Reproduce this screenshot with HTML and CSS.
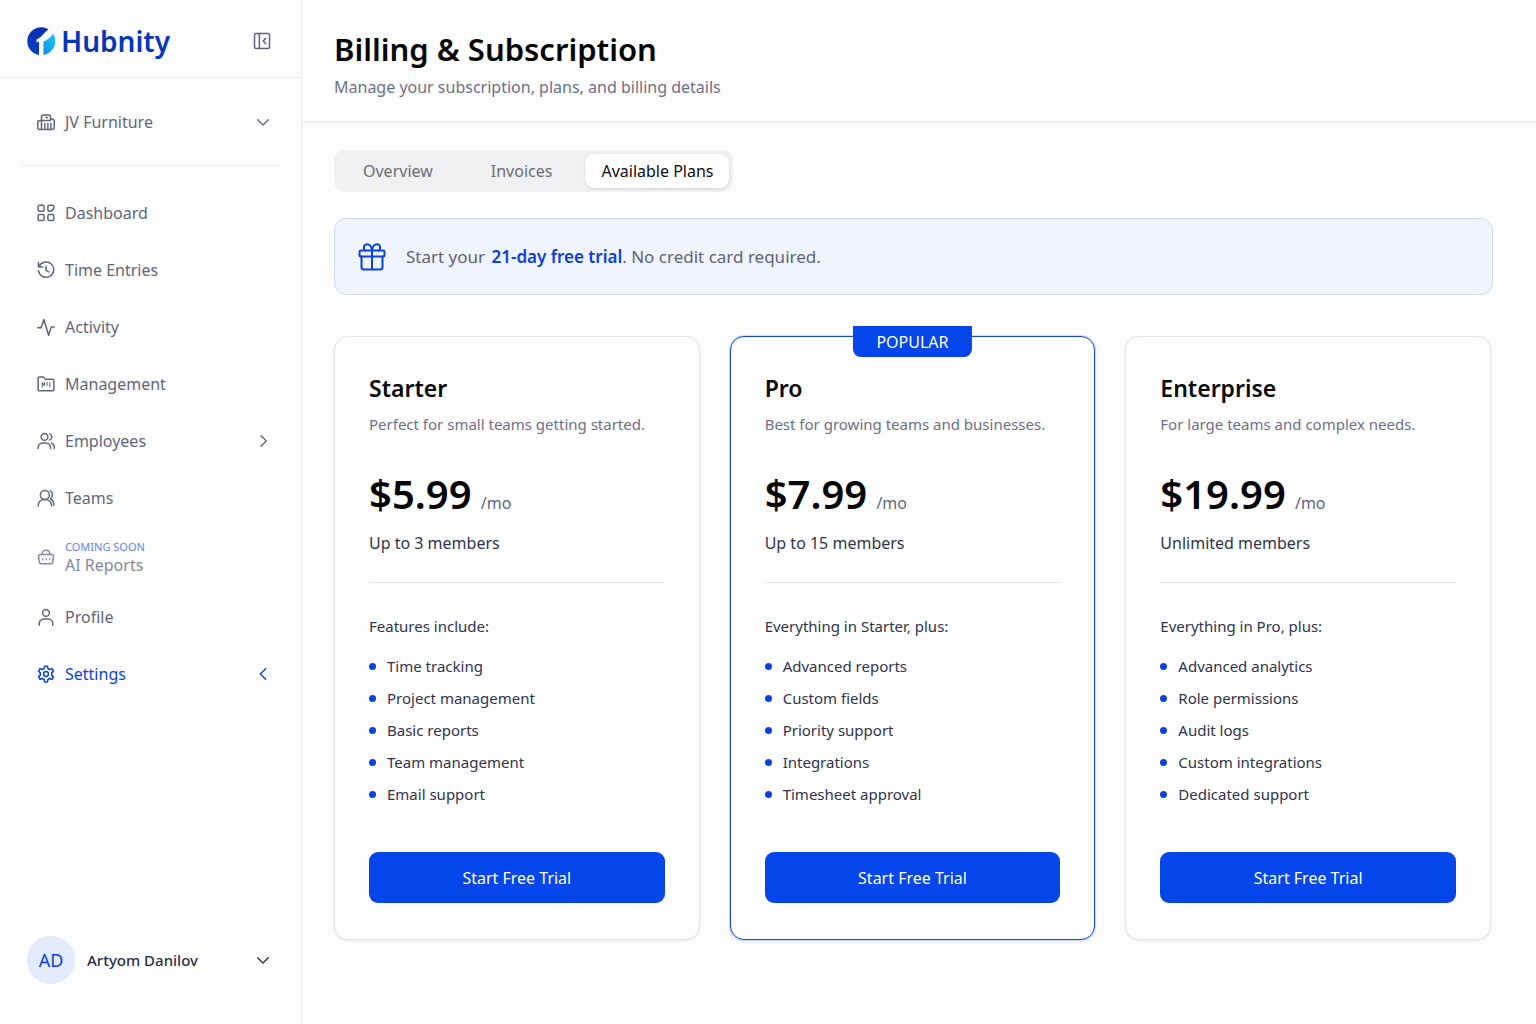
FILE: index.html
```html
<!DOCTYPE html>
<html lang="en">
<head>
  <meta charset="UTF-8" />
  <meta name="viewport" content="width=device-width, initial-scale=1.0"/>
  <title>Hubnity - Billing &amp; Subscription</title>
  <link rel="stylesheet" href="styles.css">
</head>
<body>
  <div class="layout">
    <!-- SIDEBAR -->
    <aside class="sidebar">
      <div class="sidebar-header">
        <a href="#" class="logo">
          <svg class="logo-mark" viewBox="0 0 28 28" aria-hidden="true">
            <defs>
              <linearGradient id="logoDark" x1="0" y1="0" x2="0" y2="1">
                <stop offset="0" stop-color="#0a2fb0"/>
                <stop offset="1" stop-color="#0540c4"/>
              </linearGradient>
              <linearGradient id="logoLight" x1="1" y1="0" x2="0" y2="1">
                <stop offset="0" stop-color="#1fd0f5"/>
                <stop offset="1" stop-color="#0a8df0"/>
              </linearGradient>
            </defs>
            <path fill="url(#logoDark)" d="M21.5 2.2A14 14 0 1 0 12 28V14.500L9.500 15.500V12.500C14 11 16.500 6 21.500 2.200Z"/>
            <path fill="url(#logoLight)" d="M26 6.500A14 14 0 0 1 16.500 28V14.500C19 13.500 23.500 11 26 6.500Z"/>
          </svg>
          <span>Hubnity</span>
        </a>
        <button type="button" class="icon-btn" aria-label="Collapse sidebar">
          <svg class="icon" viewBox="0 0 24 24"><rect x="2" y="2" width="20" height="20" rx="2"/><path d="M8.500 2v20M17 8.500L13.500 12l3.500 3.500"/></svg>
        </button>
      </div>

      <div class="company">
        <button type="button" class="nav-item">
          <svg class="icon" viewBox="0 0 24 24"><path d="M7 22H4a3 3 0 0 1-3-3v-6a3 3 0 0 1 3-3h2M18 8h2a3 3 0 0 1 3 3v8a3 3 0 0 1-3 3H7M6 22V5a2.500 2.500 0 0 1 2.500-2.500h7A2.500 2.500 0 0 1 18 5v5M6 10h12M10.500 22v-8M14.500 22v-8M18.500 22v-8M12 6h2"/></svg>
          <span>JV Furniture</span>
          <svg class="icon arrow" viewBox="0 0 24 24"><path d="M4 8.500l8 8 8-8"/></svg>
        </button>
      </div>

      <nav class="nav">
        <a href="#" class="nav-item">
          <svg class="icon" viewBox="0 0 24 24"><rect x="1.500" y="1.500" width="8" height="8" rx="2"/><path d="M16.500 1.500h4a2 2 0 0 1 2 2v2.500L19 9.500h-2.500a2 2 0 0 1-2-2v-4a2 2 0 0 1 2-2z"/><rect x="1.500" y="14" width="8" height="8" rx="2"/><rect x="14.500" y="14" width="8" height="8" rx="2"/></svg>
          <span>Dashboard</span>
        </a>
        <a href="#" class="nav-item">
          <svg class="icon" viewBox="0 0 24 24"><path d="M2 2v6h5.500M2.500 8A10.200 10.200 0 1 1 2 13M12 7v5.500l3.500 2"/></svg>
          <span>Time Entries</span>
        </a>
        <a href="#" class="nav-item">
          <svg class="icon" viewBox="0 0 24 24"><path d="M1 13h4.500L9 2l6.500 21 3.500-11h4"/></svg>
          <span>Activity</span>
        </a>
        <a href="#" class="nav-item">
          <svg class="icon" viewBox="0 0 24 24"><path d="M1.500 4A1.500 1.500 0 0 1 3 2.500h5.500l2.500 3h10A1.500 1.500 0 0 1 22.500 7v12.500A1.500 1.500 0 0 1 21 21H3a1.500 1.500 0 0 1-1.500-1.500z"/><path stroke-width="1.500" d="M7 16v-5.500l3 3.500v-4M13.500 10v3.500M17 10v5.500"/></svg>
          <span>Management</span>
        </a>
        <a href="#" class="nav-item">
          <svg class="icon" viewBox="0 0 24 24"><circle cx="10" cy="6.500" r="4.500"/><path d="M1.500 22v-1.500a6 6 0 0 1 6-6h4.500a6 6 0 0 1 6 6V22M17 2.500a4.200 4.200 0 0 1 0 8M19 14.500a6 6 0 0 1 4 5.500v2"/></svg>
          <span>Employees</span>
          <svg class="icon arrow" viewBox="0 0 24 24"><path d="M9 4l8 8-8 8"/></svg>
        </a>
        <a href="#" class="nav-item">
          <svg class="icon" viewBox="0 0 24 24"><circle cx="10.500" cy="8" r="6"/><path d="M1.500 22.500c0-5 3.500-8.500 9-8.500s9 3.500 9 8.500M17.500 2.500c4 1.500 4 8 .5 10.500 3 1.500 4.500 5 4.500 8.500"/></svg>
          <span>Teams</span>
        </a>
        <a href="#" class="nav-item soon">
          <svg class="icon" viewBox="0 0 24 24"><path d="M4.500 8.500h15a2.500 2.500 0 0 1 2.500 2.500l-1 7.500a3 3 0 0 1-3 2.500H6a3 3 0 0 1-3-2.500L2 11a2.500 2.500 0 0 1 2.500-2.500zM6.500 8.500C7 5 9 3 12 3s5 2 5.500 5.500M7.500 14.500v1.500M12.500 14.500v1M17 14.500v.5"/></svg>
          <span><small>COMING SOON</small>AI Reports</span>
        </a>
        <a href="#" class="nav-item">
          <svg class="icon" viewBox="0 0 24 24"><circle cx="12" cy="6.500" r="4.500"/><path d="M3 23v-2.500a6 6 0 0 1 6-6h6a6 6 0 0 1 6 6V23"/></svg>
          <span>Profile</span>
        </a>
        <a href="#" class="nav-item active">
          <svg class="icon" viewBox="0 0 24 24"><path d="M10.200 1.500h3.600l.8 3.200 2.300 1.300 3.100-1 1.900 3.200-2.300 2.300v3l2.300 2.300-1.900 3.200-3.100-1-2.300 1.300-.8 3.200h-3.600l-.8-3.200L7.100 18 4 19l-1.900-3.200 2.300-2.300v-3L2.100 8.200 4 5l3.100 1 2.300-1.300z"/><circle cx="12" cy="12" r="3.200"/></svg>
          <span>Settings</span>
          <svg class="icon arrow" viewBox="0 0 24 24"><path d="M16 4l-8 8 8 8"/></svg>
        </a>
      </nav>

      <button type="button" class="user">
        <span class="avatar">AD</span>
        <span>Artyom Danilov</span>
        <svg class="icon arrow" viewBox="0 0 24 24"><path d="M4 8.500l8 8 8-8"/></svg>
      </button>
    </aside>

    <!-- CONTENT -->
    <main class="main">
      <header class="page-header">
        <h1>Billing &amp; Subscription</h1>
        <p>Manage your subscription, plans, and billing details</p>
      </header>

      <div class="content">
        <div class="tabs" role="tablist">
          <button type="button" class="tab" role="tab">Overview</button>
          <button type="button" class="tab" role="tab">Invoices</button>
          <button type="button" class="tab active" role="tab" aria-selected="true">Available Plans</button>
        </div>

        <div class="banner">
          <svg class="icon gift" viewBox="0 0 28 28"><rect x="1.500" y="7.500" width="25" height="6" rx="1.500"/><path d="M3.500 13.500V24A2.500 2.500 0 0 0 6 26.500h16a2.500 2.500 0 0 0 2.500-2.500V13.500M14 7.500v19M14 7.500C13.500 4 12 1.200 9 1.200S5 5 7 7.500M14 7.500C14.500 4 16 1.200 19 1.200S23 5 21 7.500"/></svg>
          <p>Start your <strong>21-day free trial</strong>. No credit card required.</p>
        </div>

        <div class="plans">
          <section class="plan">
            <h2>Starter</h2>
            <p class="desc">Perfect for small teams getting started.</p>
            <p class="price"><strong>$5.99</strong> /mo</p>
            <p class="members">Up to 3 members</p>
            <h3>Features include:</h3>
            <ul>
              <li>Time tracking</li>
              <li>Project management</li>
              <li>Basic reports</li>
              <li>Team management</li>
              <li>Email support</li>
            </ul>
            <button type="button" class="btn">Start Free Trial</button>
          </section>

          <section class="plan popular">
            <span class="badge">POPULAR</span>
            <h2>Pro</h2>
            <p class="desc">Best for growing teams and businesses.</p>
            <p class="price"><strong>$7.99</strong> /mo</p>
            <p class="members">Up to 15 members</p>
            <h3>Everything in Starter, plus:</h3>
            <ul>
              <li>Advanced reports</li>
              <li>Custom fields</li>
              <li>Priority support</li>
              <li>Integrations</li>
              <li>Timesheet approval</li>
            </ul>
            <button type="button" class="btn">Start Free Trial</button>
          </section>

          <section class="plan">
            <h2>Enterprise</h2>
            <p class="desc">For large teams and complex needs.</p>
            <p class="price"><strong>$19.99</strong> /mo</p>
            <p class="members">Unlimited members</p>
            <h3>Everything in Pro, plus:</h3>
            <ul>
              <li>Advanced analytics</li>
              <li>Role permissions</li>
              <li>Audit logs</li>
              <li>Custom integrations</li>
              <li>Dedicated support</li>
            </ul>
            <button type="button" class="btn">Start Free Trial</button>
          </section>
        </div>
      </div>
    </main>
  </div>
</body>
</html>
```
FILE: styles.css
```css
* {
  margin: 0;
  padding: 0;
  box-sizing: border-box;
}

body {
  font-family: "Noto Sans", "Open Sans", sans-serif;
  font-size: 16px;
  line-height: 24px;
  color: #30344d;
  background-color: #fdfdfe;
}

button {
  font: inherit;
  color: inherit;
  background: none;
  border: none;
  cursor: pointer;
}

a {
  color: inherit;
  text-decoration: none;
}

.layout {
  display: flex;
  min-height: 100vh;
}

.icon {
  width: 18px;
  height: 18px;
  flex-shrink: 0;
  fill: none;
  stroke: currentColor;
  stroke-width: 2;
  stroke-linecap: round;
  stroke-linejoin: round;
}

/* Sidebar */
.sidebar {
  display: flex;
  flex-direction: column;
  flex-shrink: 0;
  width: 302px;
  border-right: 1px solid #e9ebf0;
  color: #62667a;
}

.sidebar-header {
  display: flex;
  justify-content: space-between;
  align-items: center;
  height: 78px;
  padding: 4px 30px 0 27px;
  border-bottom: 1px solid #e9ebf0;
}

.logo {
  display: flex;
  align-items: center;
  gap: 6px;
  font-size: 28px;
  font-weight: 600;
  color: #0636b8;
}

.logo-mark {
  width: 28px;
  height: 28px;
}

.icon-btn {
  display: flex;
}

.company {
  margin: 0 22px;
  padding: 23px 0;
  border-bottom: 1px solid #e9ebf0;
}

.nav {
  display: flex;
  flex-direction: column;
  gap: 16px;
  padding: 26px 22px;
}

.nav-item {
  display: flex;
  align-items: center;
  gap: 10px;
  width: 100%;
  min-height: 41px;
  padding: 0 8px 0 15px;
}

.arrow {
  width: 16px;
  height: 16px;
  margin-left: auto;
}

.nav-item.active {
  color: #0a42e0;
}

.soon {
  min-height: 46px;
  line-height: 20px;
  color: #858998;
}

.soon small {
  display: block;
  font-size: 11px;
  line-height: 16px;
  color: #5f86ee;
}

.user {
  display: flex;
  align-items: center;
  gap: 12px;
  margin-top: auto;
  padding: 0 30px 40px 27px;
  font-size: 15px;
  font-weight: 500;
  color: #2a2e42;
}

.avatar {
  display: flex;
  justify-content: center;
  align-items: center;
  width: 48px;
  height: 48px;
  border-radius: 50%;
  font-size: 18px;
  font-weight: 400;
  color: #0a42e0;
  background-color: #e3eafc;
}

/* Content */
.main {
  flex: 1;
  min-width: 0;
}

.page-header {
  padding: 27px 32px 22px;
  border-bottom: 2px solid #f0f1f4;
}

.page-header h1 {
  font-size: 31px;
  line-height: 44px;
  font-weight: 600;
  color: #060608;
}

.page-header p {
  margin-top: 4px;
  color: #6d7085;
}

.content {
  padding: 27px 43px 28px 32px;
}

.tabs {
  display: inline-flex;
  gap: 8px;
  padding: 4px;
  border-radius: 11px;
  background-color: #f1f1f3;
}

.tab {
  height: 34px;
  padding: 0 25px;
  border-radius: 9px;
  color: #6b6d76;
}

.tab.active {
  padding: 0 16px;
  color: #0c0c10;
  background-color: #fff;
  box-shadow: 0 1px 3px rgba(0,0,0,0.12);
}

.banner {
  display: flex;
  align-items: center;
  gap: 20px;
  min-height: 77px;
  margin-top: 26px;
  padding: 0 23px;
  border: 1px solid #cfdaf8;
  border-radius: 12px;
  font-size: 17px;
  color: #5f6376;
  background-color: #f0f4ff;
}

.banner strong {
  margin-left: 2px;
  font-weight: 600;
  color: #0a3fd8;
}

.gift {
  width: 28px;
  height: 28px;
  color: #0a42e0;
}

.plans {
  display: grid;
  grid-template-columns: repeat(3, 1fr);
  gap: 30px;
  margin-top: 41px;
  padding-right: 2px;
}

.plan {
  position: relative;
  padding: 34px 34px 36px;
  border: 1px solid #e4e5e9;
  border-radius: 14px;
  background-color: #fefefe;
  box-shadow: 0 1px 3px rgba(0,0,0,0.08);
}

.plan.popular {
  border-color: #1048dc;
  box-shadow: 0 0 0 1px #cfdcff, 0 2px 4px rgba(0,0,0,0.08);
}

.badge {
  position: absolute;
  top: -11px;
  left: 50%;
  transform: translateX(-50%);
  padding: 4px 23px 3px;
  border-radius: 0 0 8px 8px;
  color: #fff;
  background-color: #0446ea;
}

.plan h2 {
  font-size: 23px;
  line-height: 34px;
  font-weight: 600;
  color: #060608;
}

.desc {
  margin-top: 7px;
  font-size: 15px;
  color: #6d7085;
}

.price {
  margin-top: 32px;
  line-height: 52px;
  color: #62667a;
}

.price strong {
  margin-right: 5px;
  font-size: 40px;
  font-weight: 600;
  color: #060608;
}

.members {
  margin-top: 2px;
  padding-bottom: 27px;
  border-bottom: 1px solid #e6e7ea;
}

.plan h3 {
  margin-top: 31px;
  font-size: 15px;
  font-weight: 400;
}

.plan ul {
  margin-top: 12px;
  list-style: none;
}

.plan li {
  display: flex;
  align-items: center;
  gap: 11px;
  font-size: 15px;
  line-height: 32px;
}

.plan li::before {
  content: "";
  width: 7px;
  height: 7px;
  border-radius: 50%;
  background-color: #0a42e0;
}

.btn {
  display: block;
  width: 100%;
  height: 51px;
  margin-top: 42px;
  border-radius: 9px;
  color: #fff;
  background-color: #0446ea;
}

.btn:hover {
  background-color: #0339c4;
}
```
